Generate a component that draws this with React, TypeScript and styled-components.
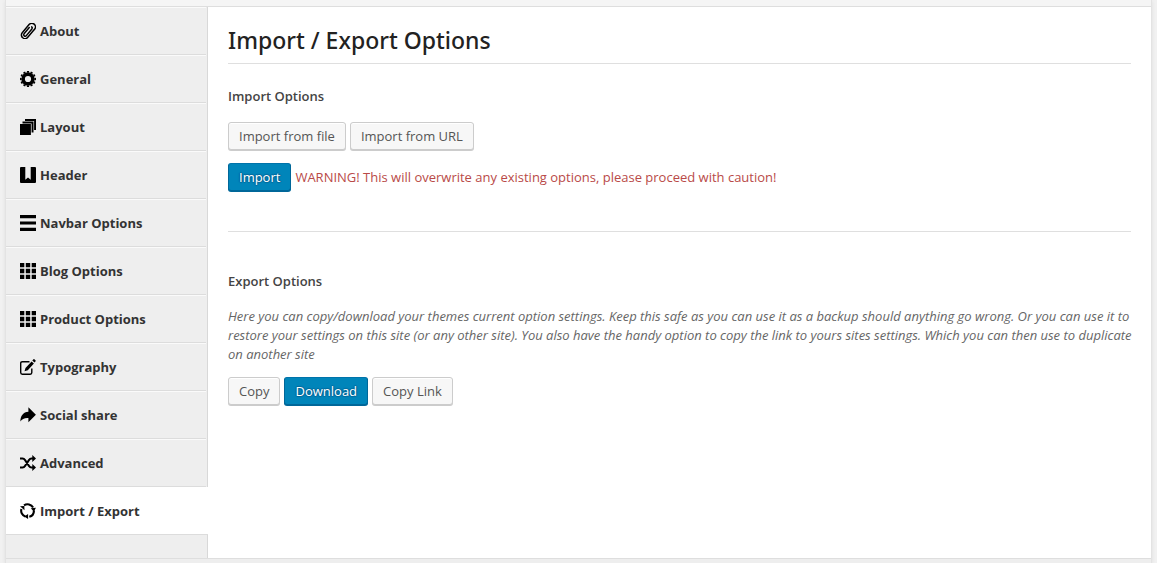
import React from "react";
import styled, { createGlobalStyle, css } from "styled-components";

const GlobalStyle = createGlobalStyle`
  *, *::before, *::after { box-sizing: border-box; }
  html, body, #root { height: 100%; }
  body {
    margin: 0;
    background: #f1f1f1;
    color: #666;
    font-family: "Open Sans", "Noto Sans", sans-serif;
    font-size: 13px;
    line-height: 19px;
  }
`;

const Page = styled.div`
  display: flex;
  min-height: 100%;
  padding: 0 5px;
`;

const Panel = styled.div`
  flex: 1;
  display: flex;
  flex-direction: column;
  border: solid #e3e3e3;
  border-width: 0 1px;
  box-shadow: 0 1px 4px rgba(0, 0, 0, 0.08);
`;

const Toolbar = styled.div`
  height: 7px;
  background: #f5f5f5;
  border-bottom: 1px solid #dedede;
`;

const Footer = styled.footer`
  height: 5px;
  background: #eee;
  border-top: 1px solid #dedede;
`;

const Body = styled.div`
  flex: 1;
  display: flex;
  background: #fff;
`;

const Sidebar = styled.nav`
  flex: none;
  width: 202px;
  background: #eee;
  border-right: 1px solid #d8d8d8;
`;

const Menu = styled.ul`
  list-style: none;
  margin: 0;
  padding: 0;
`;

const MenuLink = styled.a<{ $active?: boolean }>`
  display: flex;
  align-items: center;
  gap: 4px;
  height: 48px;
  margin-right: 1px;
  padding: 0 14px;
  border-top: 1px solid #fafafa;
  border-bottom: 1px solid #dcdcdc;
  color: #333;
  font-weight: 700;
  text-decoration: none;
  ${(p) =>
    p.$active &&
    css`
      margin-right: -1px;
      background: #fff;
      border-top-color: #fff;
    `}
`;

const Icon = styled.svg`
  flex: none;
  width: 16px;
  height: 16px;
  fill: #000;
`;

const Main = styled.main`
  flex: 1;
  min-width: 0;
  padding: 18px 20px 20px;
`;

const Title = styled.h1`
  margin: 0;
  padding-bottom: 7px;
  border-bottom: 1px solid #dfdfdf;
  color: #222;
  font-family: "Noto Sans", "Open Sans", sans-serif;
  font-size: 23px;
  font-weight: 500;
  line-height: 31px;
`;

const Section = styled.section`
  padding-top: 23px;

  & + & {
    margin-top: 39px;
    padding-top: 40px;
    border-top: 1px solid #dfdfdf;
  }
`;

const Heading = styled.h2`
  margin: 0 0 16px;
  color: #444;
  font-size: 13px;
  font-weight: 600;
  line-height: 19px;
`;

const Description = styled.p`
  margin: 0 -8px 13px 0;
  font-style: italic;
`;

const Row = styled.div<{ $gap: number }>`
  display: flex;
  flex-wrap: wrap;
  align-items: center;
  gap: ${(p) => p.$gap}px;

  & + & {
    margin-top: 12px;
  }
`;

const Button = styled.button<{ $primary?: boolean }>`
  height: 28px;
  margin: 0 0 1px;
  padding: 0 10px;
  border: 1px solid #ccc;
  border-radius: 3px;
  background: #f7f7f7;
  box-shadow: inset 0 1px 0 #fff, 0 1px 0 #ccc;
  color: #555;
  font: inherit;
  line-height: 26px;
  cursor: pointer;
  ${(p) =>
    p.$primary &&
    css`
      border-color: #0073aa #006799 #006799;
      background: #0085ba;
      box-shadow: 0 1px 0 #006799;
      color: #fff;
      text-shadow: 0 -1px 1px #006799, 1px 0 1px #006799, 0 1px 1px #006799,
        -1px 0 1px #006799;
    `}
`;

const Warning = styled.span`
  color: #b94a48;
`;

const icons: Record<string, React.ReactNode> = {
  clip: (
    <g
      transform="rotate(40 8 8)"
      fill="none"
      stroke="#000"
      strokeWidth="1.5"
      strokeLinecap="round"
    >
      <path d="M11.900 4.500V13a3.600 3.600 0 0 1-7.200 0V2.400a3.600 3.600 0 0 1 7.200 0V4.500" />
      <path d="M9.700 4v8.600a1.500 1.500 0 0 1-3 0V4.500M9.700 4a1.500 1.500 0 0 0-1.500-1.500" />
    </g>
  ),
  gear: (
    <>
      <circle cx="8" cy="8" r="4.900" fill="none" stroke="#000" strokeWidth="3.600" />
      <circle
        cx="8"
        cy="8"
        r="7.200"
        fill="none"
        stroke="#000"
        strokeWidth="1.600"
        pathLength="24"
        strokeDasharray="1.150 0.850"
        strokeDashoffset="0.570"
      />
    </>
  ),
  layers: (
    <path d="M0 5.100h10.900V16H0zM2.500 2.500h11v11h-1.900V4.400H2.500zM5 0h11v11h-1.900V1.900H5z" />
  ),
  bookmark: (
    <path d="M1 0h4.300v12.700l2.700-2.300 2.700 2.300V0H15q1 0 1 1v14q0 1-1 1H1q-1 0-1-1V1q0-1 1-1z" />
  ),
  lines: <path d="M0 0h16v3.200H0zM0 6.400h16v3.200H0zM0 12.800h16V16H0z" />,
  grid: (
    <path d="M0 0h4.300v4.300H0zM5.800 0h4.400v4.300H5.800zM11.700 0H16v4.300h-4.300zM0 5.800h4.300v4.400H0zM5.800 5.800h4.400v4.400H5.800zM11.700 5.800H16v4.400h-4.300zM0 11.700h4.300V16H0zM5.800 11.700h4.400V16H5.800zM11.700 11.700H16V16h-4.300z" />
  ),
  edit: (
    <>
      <path
        d="M9.500 2.700H2.300Q.7 2.700.7 4.300v9.300q0 1.600 1.600 1.600h7.900q1.600 0 1.600-1.600V9.500"
        fill="none"
        stroke="#000"
        strokeWidth="1.400"
      />
      <path d="M11.600 2.400 13.900 4.500 7.800 11.200 4.500 12.300 5.500 9zM12.300 1.600 13.500.3q.4-.4.9 0l1.200 1.100q.4.400 0 .9l-1.100 1.300z" />
    </>
  ),
  share: (
    <path d="M8.400.3 15.900 7.800 8.400 15.300V11C4.500 10.700 2 12 .4 14.500.3 9 3.300 5.100 8.400 4.800z" />
  ),
  shuffle: (
    <>
      <path
        d="M0 3.500h2.500Q4 3.500 5 5l4 6q1 1.500 2.500 1.500h2M0 12.500h2.500Q4 12.500 5 11l4-6q1-1.500 2.500-1.500h2"
        fill="none"
        stroke="#000"
        strokeWidth="2.200"
      />
      <path d="M12.300 0 16 3.500 12.300 7zM12.300 9 16 12.500 12.300 16z" />
    </>
  ),
  refresh: (
    <>
      <path
        d="M4 2.400A6.300 6.300 0 0 1 13.100 4.600M13.900 7.500A6.300 6.300 0 0 1 9.300 13.800M5.300 13.600A6.300 6.300 0 0 1 1.400 6"
        fill="none"
        stroke="#000"
        strokeWidth="2.100"
      />
      <path d="M10.800 5.200 15.900 4.800 13.900 8.800zM8.100 10.900V15.900L4.200 13.600zM0 3.200 4.300 2.900 4.500 7.200z" />
    </>
  ),
};

const items = [
  { label: "About", icon: "clip" },
  { label: "General", icon: "gear" },
  { label: "Layout", icon: "layers" },
  { label: "Header", icon: "bookmark" },
  { label: "Navbar Options", icon: "lines" },
  { label: "Blog Options", icon: "grid" },
  { label: "Product Options", icon: "grid" },
  { label: "Typography", icon: "edit" },
  { label: "Social share", icon: "share" },
  { label: "Advanced", icon: "shuffle" },
  { label: "Import / Export", icon: "refresh", active: true },
];

export default function App() {
  return (
    <>
      <GlobalStyle />
      <Page>
        <Panel>
          <Toolbar />
          <Body>
            <Sidebar>
              <Menu>
                {items.map((item) => (
                  <li key={item.label}>
                    <MenuLink
                      href="#"
                      $active={item.active}
                      aria-current={item.active ? "page" : undefined}
                    >
                      <Icon viewBox="0 0 16 16" aria-hidden="true">
                        {icons[item.icon]}
                      </Icon>
                      {item.label}
                    </MenuLink>
                  </li>
                ))}
              </Menu>
            </Sidebar>
            <Main>
              <Title>Import / Export Options</Title>
              <Section>
                <Heading>Import Options</Heading>
                <Row $gap={4}>
                  <Button type="button">Import from file</Button>
                  <Button type="button">Import from URL</Button>
                </Row>
                <Row $gap={4}>
                  <Button type="button" $primary>
                    Import
                  </Button>
                  <Warning>
                    WARNING! This will overwrite any existing options, please
                    proceed with caution!
                  </Warning>
                </Row>
              </Section>
              <Section>
                <Heading>Export Options</Heading>
                <Description>
                  Here you can copy/download your themes current option
                  settings. Keep this safe as you can use it as a backup should
                  anything go wrong. Or you can use it to restore your settings
                  on this site (or any other site). You also have the handy
                  option to copy the link to yours sites settings. Which you can
                  then use to duplicate on another site
                </Description>
                <Row $gap={4}>
                  <Button type="button">Copy</Button>
                  <Button type="button" $primary>
                    Download
                  </Button>
                  <Button type="button">Copy Link</Button>
                </Row>
              </Section>
            </Main>
          </Body>
          <Footer />
        </Panel>
      </Page>
    </>
  );
}
